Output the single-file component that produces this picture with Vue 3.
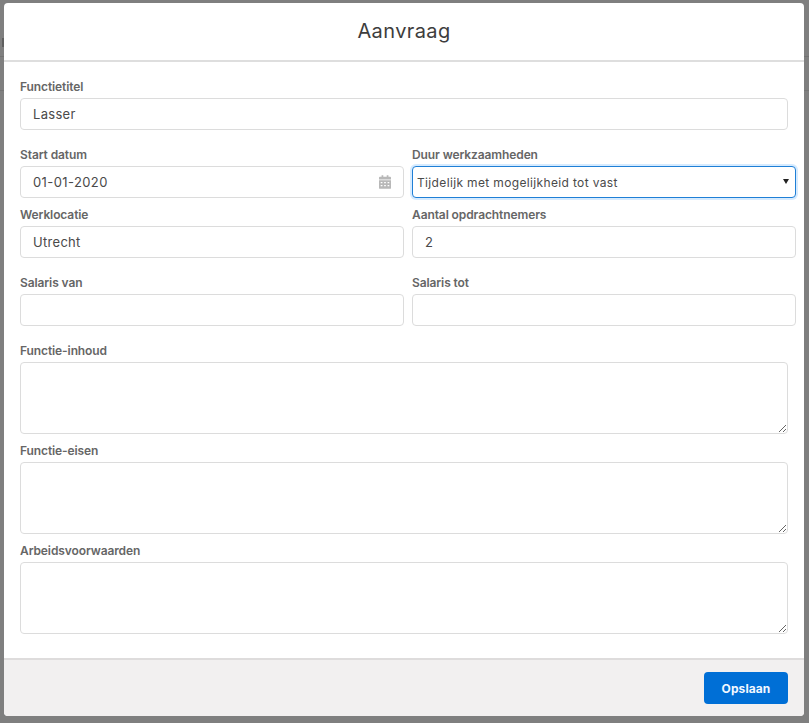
<template>
  <div class="backdrop">
    <div class="modal">
      <header class="modal-header">
        <h1>Aanvraag</h1>
      </header>
      <form class="modal-body" @submit.prevent>
        <div class="field">
          <label>Functietitel</label>
          <input class="control" type="text" value="Lasser" />
        </div>

        <div class="row tight">
          <div class="field">
            <label>Start datum</label>
            <div class="date-wrap">
              <input class="control date" type="text" value="01-01-2020" />
              <svg class="calendar" viewBox="0 0 14 16" width="12" height="14">
                <path fill="#b8b8b8" d="M3 0h2v2h4V0h2v2h2a1 1 0 0 1 1 1v2H0V3a1 1 0 0 1 1-1h2zM0 6h14v9a1 1 0 0 1-1 1H1a1 1 0 0 1-1-1z" />
                <path fill="#fff" d="M2 8h2v1.5H2zM6 8h2v1.5H6zM10 8h2v1.5h-2zM2 11.5h2V13H2zM6 11.5h2V13H6zM10 11.5h2V13h-2z" />
              </svg>
            </div>
          </div>
          <div class="field">
            <label>Duur werkzaamheden</label>
            <div class="select-wrap">
              <select class="control select">
                <option>Tijdelijk met mogelijkheid tot vast</option>
              </select>
              <span class="caret"></span>
            </div>
          </div>
        </div>

        <div class="row">
          <div class="field">
            <label>Werklocatie</label>
            <input class="control" type="text" value="Utrecht" />
          </div>
          <div class="field">
            <label>Aantal opdrachtnemers</label>
            <input class="control" type="text" value="2" />
          </div>
        </div>

        <div class="row">
          <div class="field">
            <label>Salaris van</label>
            <input class="control" type="text" />
          </div>
          <div class="field">
            <label>Salaris tot</label>
            <input class="control" type="text" />
          </div>
        </div>

        <div v-for="name in areas" :key="name" class="field tight">
          <label>{{ name }}</label>
          <textarea class="control area"></textarea>
        </div>
      </form>
      <footer class="modal-footer">
        <button class="save" type="button">Opslaan</button>
      </footer>
    </div>
  </div>
</template>

<script setup>
const areas = ['Functie-inhoud', 'Functie-eisen', 'Arbeidsvoorwaarden']
</script>

<style>
html, body {
  margin: 0;
  background: #7f7f7f;
}
</style>

<style scoped>
.backdrop {
  height: 723px;
  box-sizing: border-box;
  padding: 3px 5px 7px 4px;
  /* faint lines of the page behind the overlay */
  background:
    linear-gradient(#727272, #727272) 0 56px / 100% 1px no-repeat,
    linear-gradient(#747474, #747474) 0 90px / 100% 1px no-repeat,
    linear-gradient(#5f5f5f, #5f5f5f) 2px 38px / 2px 9px no-repeat,
    #7f7f7f;
  font-family: Inter, 'Liberation Sans', sans-serif;
  overflow: hidden;
}

.modal {
  height: 713px;
  display: flex;
  flex-direction: column;
  background: #fff;
  border-radius: 4px;
  overflow: hidden;
}

.modal-header {
  height: 57px;
  flex: none;
  box-sizing: content-box;
  padding-bottom: 0;
  display: flex;
  align-items: center;
  justify-content: center;
  border-bottom: 2px solid #dedede;
}

.modal-header h1 {
  margin: 0 0 2px;
  font-size: 20px;
  font-weight: 400;
  letter-spacing: 0.4px;
  color: #3d3d3d;
}

.modal-body {
  flex: 1;
  box-sizing: border-box;
  padding: 16px 16px 0;
}

.field {
  display: flex;
  flex-direction: column;
  margin-bottom: 16px;
}

.field.tight,
.row.tight .field {
  margin-bottom: 8px;
}

.row {
  display: grid;
  grid-template-columns: 1fr 1fr;
  gap: 8px;
  width: calc(100% + 8px);
}

label {
  height: 20px;
  font-size: 12px;
  line-height: 18px;
  font-weight: 600;
  letter-spacing: -0.1px;
  color: #666;
}

.control {
  box-sizing: border-box;
  width: 100%;
  height: 32px;
  padding: 0 12px;
  border: 1px solid #dcdcdc;
  border-radius: 4px;
  background: #fff;
  font: inherit;
  font-size: 13px;
  letter-spacing: 0.3px;
  color: #4a4a4a;
  outline: none;
}

.date {
  letter-spacing: 0.4px;
}

.area {
  display: block;
  height: 72px;
  padding: 8px 12px;
}

.date-wrap,
.select-wrap {
  position: relative;
}

.calendar {
  position: absolute;
  right: 13px;
  top: 9px;
}

.select {
  appearance: none;
  padding: 0 4px;
  font-size: 12px;
  letter-spacing: 0.35px;
  border-color: #1f7fd6;
  box-shadow: 0 0 0 2px rgba(120, 190, 255, 0.3);
}

.caret {
  position: absolute;
  right: 7px;
  top: 13px;
  border-left: 3px solid transparent;
  border-right: 3px solid transparent;
  border-top: 5px solid #222;
}

.modal-footer {
  height: 58px;
  flex: none;
  box-sizing: border-box;
  display: flex;
  justify-content: flex-end;
  padding: 12px 16px;
  background: #f2f0f0;
  border-top: 2px solid #dedcdc;
}

.save {
  width: 84px;
  height: 32px;
  border: 0;
  border-radius: 4px;
  background: #006fd6;
  color: #f2f8ff;
  font: inherit;
  font-size: 12px;
  font-weight: 700;
  letter-spacing: 0.1px;
}
</style>
